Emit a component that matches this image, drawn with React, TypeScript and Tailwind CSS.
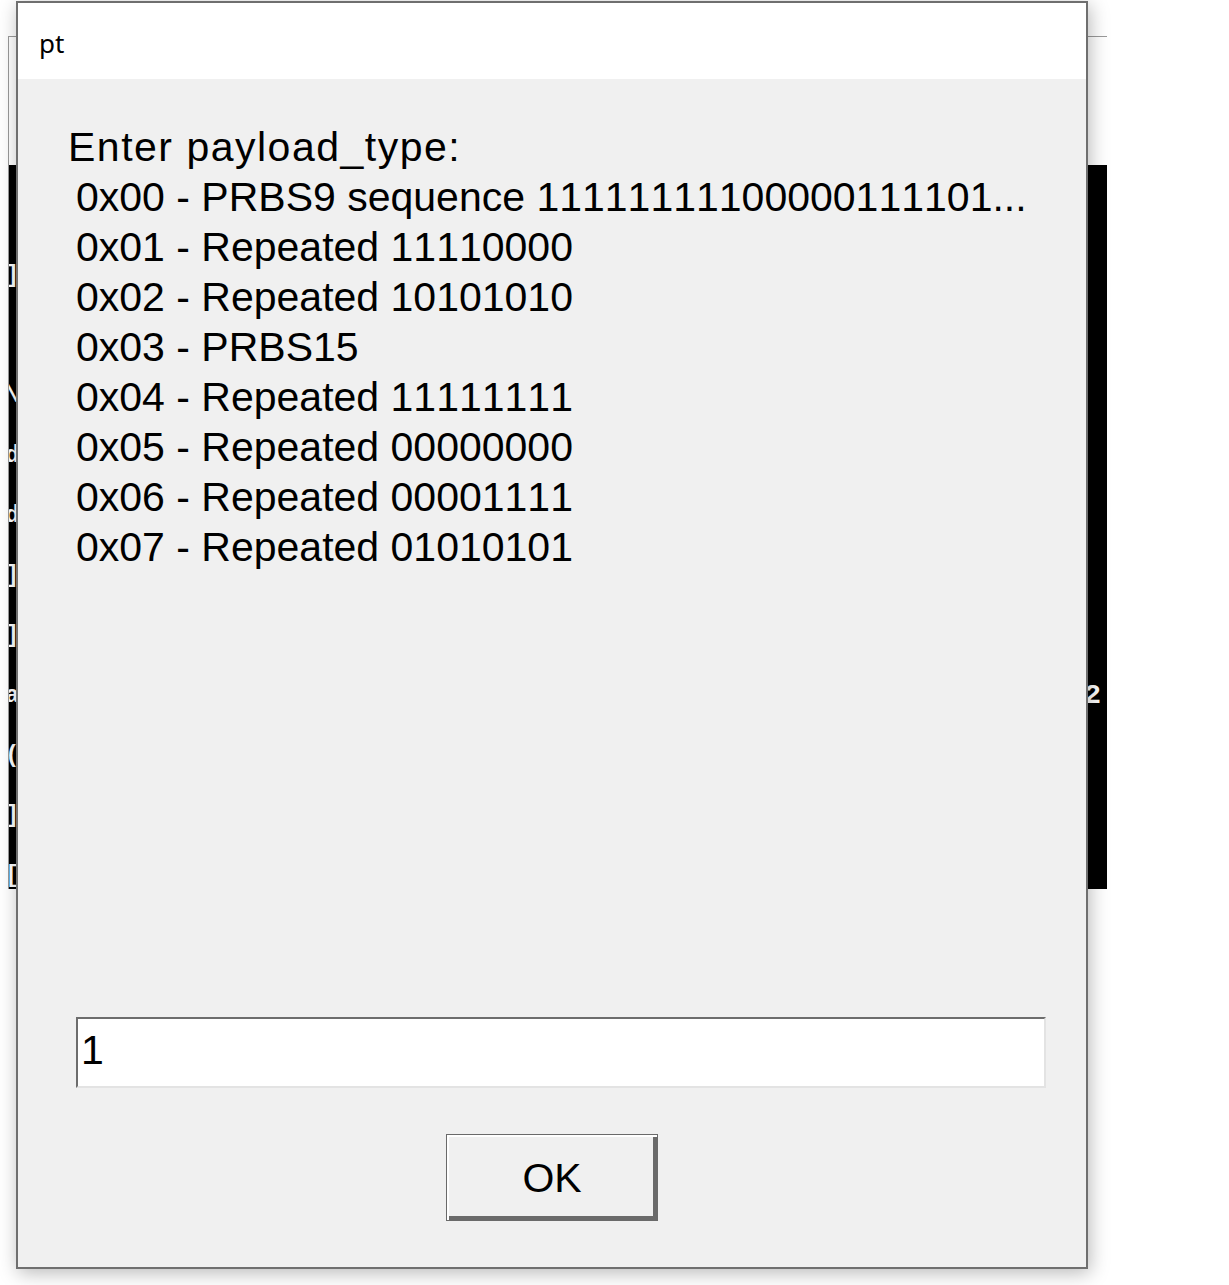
import React from "react";

const payloadTypes = [
  "0x00 - PRBS9 sequence 11111111100000111101...",
  "0x01 - Repeated 11110000",
  "0x02 - Repeated 10101010",
  "0x03 - PRBS15",
  "0x04 - Repeated 11111111",
  "0x05 - Repeated 00000000",
  "0x06 - Repeated 00001111",
  "0x07 - Repeated 01010101",
];

// console rows behind the dialog, mostly hidden
const consoleRows = [
  { left: " ", right: "" },
  { left: "]", right: "" },
  { left: " ", right: "" },
  { left: "\\", right: "" },
  { left: "d", right: "" },
  { left: "d", right: "" },
  { left: "]", right: "" },
  { left: "]", right: "" },
  { left: "a", right: "2" },
  { left: "(", right: "" },
  { left: "]", right: "" },
  { left: "[", right: "" },
];

const ConsoleWindow: React.FC = () => {
  return (
    <div className="absolute left-[8px] top-[36px] w-[1099px] h-[853px] flex flex-col border-l border-t border-[#9a9a9a] bg-white">
      <div className="h-[128px] bg-white" />
      <div className="flex-1 bg-black overflow-hidden pt-[21px] font-['Liberation_Mono',monospace] font-bold text-[24px] leading-[60px] text-white">
        {consoleRows.map((row, i) => (
          <div key={i} className="flex h-[60px] whitespace-pre">
            <span className="-ml-[4px]">{row.left}</span>
            <span className="ml-auto pr-[6px] text-[28px]">{row.right}</span>
          </div>
        ))}
      </div>
    </div>
  );
};

const PromptDialog: React.FC = () => {
  return (
    <div className="absolute left-[16px] top-[1px] w-[1072px] h-[1268px] flex flex-col border-2 border-[#6f6f6f] bg-[#f0f0f0] shadow-[2px_4px_18px_rgba(0,0,0,0.28)]">
      <div className="h-[76px] shrink-0 bg-white pl-[21px] pt-[27px]">
        <span className="font-['Noto_Sans',sans-serif] text-[26px] leading-none text-black">
          pt
        </span>
      </div>

      <div className="flex flex-col flex-1 font-['Liberation_Sans',Arial,sans-serif] text-[41px] leading-[50px] text-black [font-kerning:none]">
        <div className="pt-[43px] pl-[50px]">
          <div className="tracking-[1.5px] whitespace-nowrap">Enter payload_type:</div>
          {payloadTypes.map((line) => (
            <div key={line} className="pl-[8px] whitespace-nowrap">
              {line}
            </div>
          ))}
        </div>

        <div className="mt-[445px] ml-[58px] mr-[40px] h-[71px] bg-white border-2 border-t-[#6d6d6d] border-l-[#6d6d6d] border-b-[#e3e3e3] border-r-[#e3e3e3] pl-[3px] pt-[6px]">
          1
        </div>

        <div className="mt-[46px] self-center w-[212px] h-[87px] flex items-center justify-center border border-[#6a6a6a] bg-[#f0f0f0] shadow-[inset_2px_2px_0_#ffffff,inset_-4px_-4px_0_#6a6a6a]">
          OK
        </div>
      </div>
    </div>
  );
};

export default function App() {
  return (
    <div className="relative w-[1229px] h-[1285px] bg-white overflow-hidden">
      <ConsoleWindow />
      <PromptDialog />
    </div>
  );
}
